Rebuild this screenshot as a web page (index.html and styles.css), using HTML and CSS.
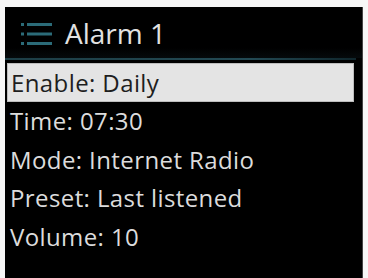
FILE: index.html
```html
<!DOCTYPE html>
<html>
<head>
<meta charset="utf-8">
<link rel="stylesheet" href="styles.css">
</head>
<body>
<div class="screen">
  <div class="header">
    <svg class="menu-icon" width="32" height="26" viewBox="0 0 32 26">
      <rect x="0" y="2" width="3" height="3" fill="#2b6b78"/>
      <rect x="0" y="11.5" width="3" height="3" fill="#2b6b78"/>
      <rect x="0" y="21" width="3" height="3" fill="#2b6b78"/>
      <rect x="6" y="2" width="25" height="3" fill="#2b6b78"/>
      <rect x="6" y="11.5" width="25" height="3" fill="#2b6b78"/>
      <rect x="6" y="21" width="25" height="3" fill="#2b6b78"/>
    </svg>
    <span class="title">Alarm 1</span>
  </div>
  <div class="separator"></div>
  <ul class="menu">
    <li class="item selected">Enable: Daily</li>
    <li class="item">Time: 07:30</li>
    <li class="item">Mode: Internet Radio</li>
    <li class="item">Preset: Last listened</li>
    <li class="item">Volume: 10</li>
  </ul>
</div>
</body>
</html>
```
FILE: styles.css
```css
html, body {
  margin: 0;
  padding: 0;
  background: #f7f7f7;
  height: 278px;
  overflow: hidden;
}
.screen {
  margin: 7px 5px 0 5px;
  height: 271px;
  background: #000;
  border-right: 1px solid #444;
  font-family: "Open Sans", "Noto Sans", sans-serif;
}
.header {
  height: 51px;
  display: flex;
  align-items: center;
  padding-left: 16px;
  gap: 12px;
  background: linear-gradient(#000 80%, #050a0c);
}
.menu-icon {
  display: block;
  margin-top: 2px;
}
.title {
  color: #e2e2e2;
  font-size: 28px;
  line-height: 1;
}
.separator {
  height: 2px;
  margin-right: 6px;
  background: linear-gradient(90deg, #1d3e46, #234a54 70%, #10262c);
}
.menu {
  list-style: none;
  margin: 0;
  padding: 3px 0 0 0;
}
.item {
  height: 38.5px;
  line-height: 37px;
  padding-left: 5px;
  color: #dcdcdc;
  font-size: 24px;
  letter-spacing: 0.4px;
  white-space: nowrap;
}
.item.selected {
  background: #e4e4e4;
  color: #1e1e1e;
  margin: 0 8px 0 2px;
  padding-left: 3px;
  height: 37px;
  border: 1px solid #bdbdbd;
}
```
